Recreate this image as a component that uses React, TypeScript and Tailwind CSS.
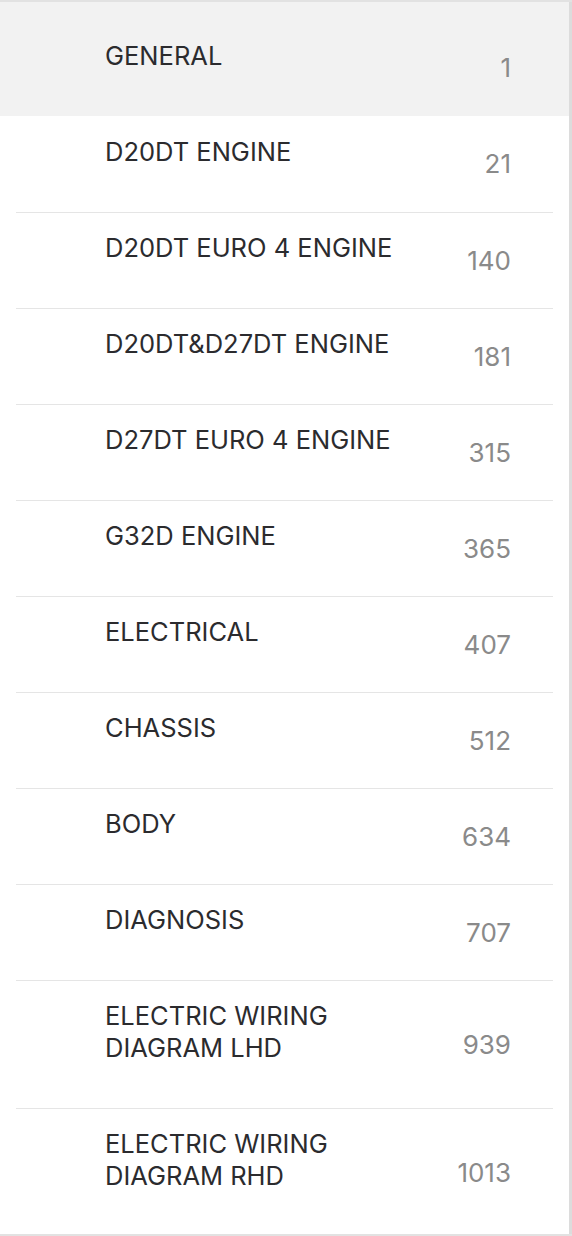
import React from "react";

const items: { label: string[]; page: string }[] = [
  { label: ["D20DT ENGINE"], page: "21" },
  { label: ["D20DT EURO 4 ENGINE"], page: "140" },
  { label: ["D20DT&D27DT ENGINE"], page: "181" },
  { label: ["D27DT EURO 4 ENGINE"], page: "315" },
  { label: ["G32D ENGINE"], page: "365" },
  { label: ["ELECTRICAL"], page: "407" },
  { label: ["CHASSIS"], page: "512" },
  { label: ["BODY"], page: "634" },
  { label: ["DIAGNOSIS"], page: "707" },
  { label: ["ELECTRIC WIRING", "DIAGRAM LHD"], page: "939" },
  { label: ["ELECTRIC WIRING", "DIAGRAM RHD"], page: "1013" },
];

export default function App() {
  return (
    <div
      className="w-[572px] h-[1236px] bg-white flex flex-col border-t-2 border-b-2 border-[#e2e2e2] overflow-hidden"
      style={{ fontFamily: "Inter, 'Liberation Sans', Arial, sans-serif" }}
    >
      <div className="flex flex-1 min-h-0">
        <div className="flex-1 flex flex-col">
          <div className="bg-[#f2f2f2] pt-[18px]">
            <div className="flex items-center">
              <div className="flex-1 pl-[105px] pt-[20px] pb-[44px] text-[25.5px] leading-[32px] text-[#2b2b2e]">
                GENERAL
              </div>
              <div className="pr-[58px] text-[26px] leading-[32px] text-[#8a8a8a]">1</div>
            </div>
          </div>
          {items.map((it, i) => (
            <div key={i} className={`mx-[16px] flex items-center ${i > 0 ? "border-t border-[#e5e5e5]" : ""}`}>
              <div
                className={`flex-1 pl-[89px] pb-[44px] text-[25.5px] leading-[32px] text-[#2b2b2e] ${
                  i > 0 ? "pt-[19px]" : "pt-[20px]"
                }`}
              >
                {it.label.map((l, j) => (
                  <div key={j}>{l}</div>
                ))}
              </div>
              <div className="pr-[42px] text-[26px] leading-[32px] text-[#8a8a8a]">{it.page}</div>
            </div>
          ))}
        </div>
        <div className="w-[3px] bg-[#dcdcdc]" />
      </div>
    </div>
  );
}
